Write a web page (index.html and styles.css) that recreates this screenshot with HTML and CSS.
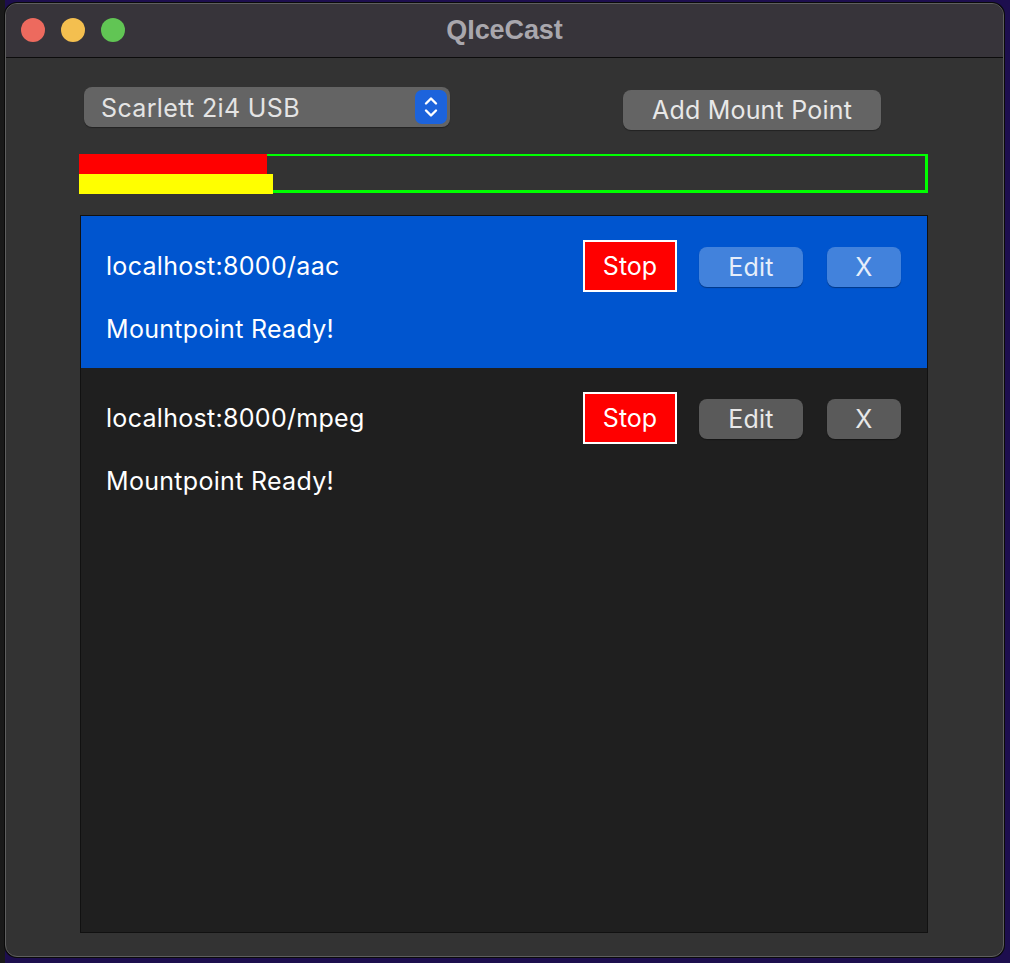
FILE: index.html
```html
<!DOCTYPE html>
<html>
<head>
<meta charset="utf-8">
<link rel="stylesheet" href="styles.css">
</head>
<body>
<div class="desk">
  <div class="window">
    <div class="titlebar">
      <div class="lights">
        <span class="light red"></span>
        <span class="light yellow"></span>
        <span class="light green"></span>
      </div>
      <div class="title">QIceCast</div>
    </div>
    <div class="content">
      <div class="toolbar">
        <div class="combo">
          <span class="combo-text">Scarlett 2i4 USB</span>
          <span class="stepper">
            <svg width="18" height="28" viewBox="0 0 18 28"><path d="M4 10.5 L9 5.5 L14 10.5 M4 17.5 L9 22.5 L14 17.5" fill="none" stroke="#fff" stroke-width="2.4" stroke-linecap="round" stroke-linejoin="round"/></svg>
          </span>
        </div>
        <button class="btn add">Add Mount Point</button>
      </div>
      <div class="meter">
        <div class="bar bar-red"></div>
        <div class="bar bar-yellow"></div>
      </div>
      <div class="list">
        <div class="row selected">
          <div class="row-top">
            <span class="url">localhost:8000/aac</span>
            <button class="stop">Stop</button>
            <button class="btn small edit">Edit</button>
            <button class="btn small x">X</button>
          </div>
          <div class="status">Mountpoint Ready!</div>
        </div>
        <div class="row">
          <div class="row-top">
            <span class="url">localhost:8000/mpeg</span>
            <button class="stop">Stop</button>
            <button class="btn small edit">Edit</button>
            <button class="btn small x">X</button>
          </div>
          <div class="status">Mountpoint Ready!</div>
        </div>
      </div>
    </div>
  </div>
</div>
</body>
</html>
```

FILE: styles.css
```css
html, body {
  margin: 0;
  padding: 0;
}
body {
  width: 1010px;
  height: 963px;
  background: linear-gradient(to right, #1a1a1a 0, #1a1a1a 5px, #1d0e4e 5px);
  overflow: hidden;
  font-family: "Inter", "Open Sans", sans-serif;
}
.desk {
  padding: 3px 0 0 5px;
}
.window {
  width: 997px;
  height: 952px;
  border: 1px solid #5e5e5e;
  border-radius: 12px;
  overflow: hidden;
  background: #333333;
  box-shadow: 0 0 0 1px #0a0a0a;
  display: flex;
  flex-direction: column;
}
.titlebar {
  height: 53px;
  flex: none;
  background: #37343a;
  border-bottom: 1px solid #0c0c0c;
  position: relative;
  display: flex;
  align-items: center;
  justify-content: center;
}
.lights {
  position: absolute;
  left: 15px;
  top: 14px;
  display: flex;
  gap: 16px;
}
.light {
  width: 24px;
  height: 24px;
  border-radius: 50%;
  display: block;
}
.red { background: #ed6a5e; }
.yellow { background: #f4bf4f; }
.green { background: #61c554; }
.title {
  font-family: "Liberation Sans", Arial, sans-serif;
  font-weight: bold;
  font-size: 27px;
  color: #a9a7ad;
  margin-left: 0;
  letter-spacing: -0.1px;
}
.content {
  flex: 1;
  padding: 29px 0 0 73px;
  display: flex;
  flex-direction: column;
}
.toolbar {
  display: flex;
  align-items: flex-start;
  height: 67px;
}
.combo {
  margin-left: 5px;
  width: 366px;
  height: 40px;
  box-sizing: border-box;
  background: #646464;
  border-radius: 8px;
  box-shadow: 0 1px 1px rgba(0,0,0,0.35);
  display: flex;
  align-items: center;
  justify-content: space-between;
  padding: 0 3px 0 17px;
}
.combo-text {
  font-size: 25px;
  letter-spacing: 0.35px;
  color: #e4e4e4;
  padding-top: 1px;
}
.stepper {
  width: 32px;
  height: 34px;
  border-radius: 7px;
  background: #1c63dc;
  display: flex;
  align-items: center;
  justify-content: center;
}
.btn {
  font-family: "Inter", "Open Sans", sans-serif;
  border: none;
  background: #646464;
  color: #e8e8e8;
  border-radius: 8px;
  box-shadow: 0 1px 1px rgba(0,0,0,0.35);
  padding: 0;
  font-size: 25px;
  letter-spacing: 0.2px;
}
.add {
  margin-left: 173px;
  margin-top: 3px;
  width: 258px;
  height: 40px;
}
.meter {
  width: 849px;
  height: 39px;
  box-sizing: border-box;
  border: 3px solid #00ff00;
  border-top-width: 2px;
  position: relative;
}
.bar {
  position: absolute;
  left: -3px;
}
.bar-red {
  top: -2px;
  width: 188px;
  height: 20px;
  background: #ff0000;
}
.bar-yellow {
  top: 18px;
  width: 194px;
  height: 20px;
  background: #ffff00;
}
.list {
  margin-top: 22px;
  margin-left: 1px;
  width: 848px;
  height: 718px;
  box-sizing: border-box;
  background: #1f1f1f;
  border: 1px solid #111;
}
.row {
  height: 152px;
  box-sizing: border-box;
  padding: 24px 0 0 25px;
  color: #fff;
}
.row.selected {
  background: #0055cf;
}
.row-top {
  display: flex;
  align-items: center;
  height: 52px;
}
.url {
  font-size: 25px;
  letter-spacing: 0.3px;
  width: 477px;
}
.stop {
  font-family: "Inter", "Open Sans", sans-serif;
  width: 94px;
  height: 52px;
  box-sizing: border-box;
  background: #ff0000;
  border: 2px solid #ffffff;
  color: #fff;
  font-size: 25px;
  padding: 0;
}
.small {
  height: 40px;
  margin-top: 1px;
}
.edit {
  margin-left: 22px;
  width: 104px;
}
.x {
  margin-left: 24px;
  width: 74px;
}
.selected .small {
  background: #4282dc;
  color: #e6eefa;
}
.row:not(.selected) .small {
  background: #5a5a5a;
}
.status {
  font-size: 25px;
  letter-spacing: 0.3px;
  margin-top: 22px;
}
```
